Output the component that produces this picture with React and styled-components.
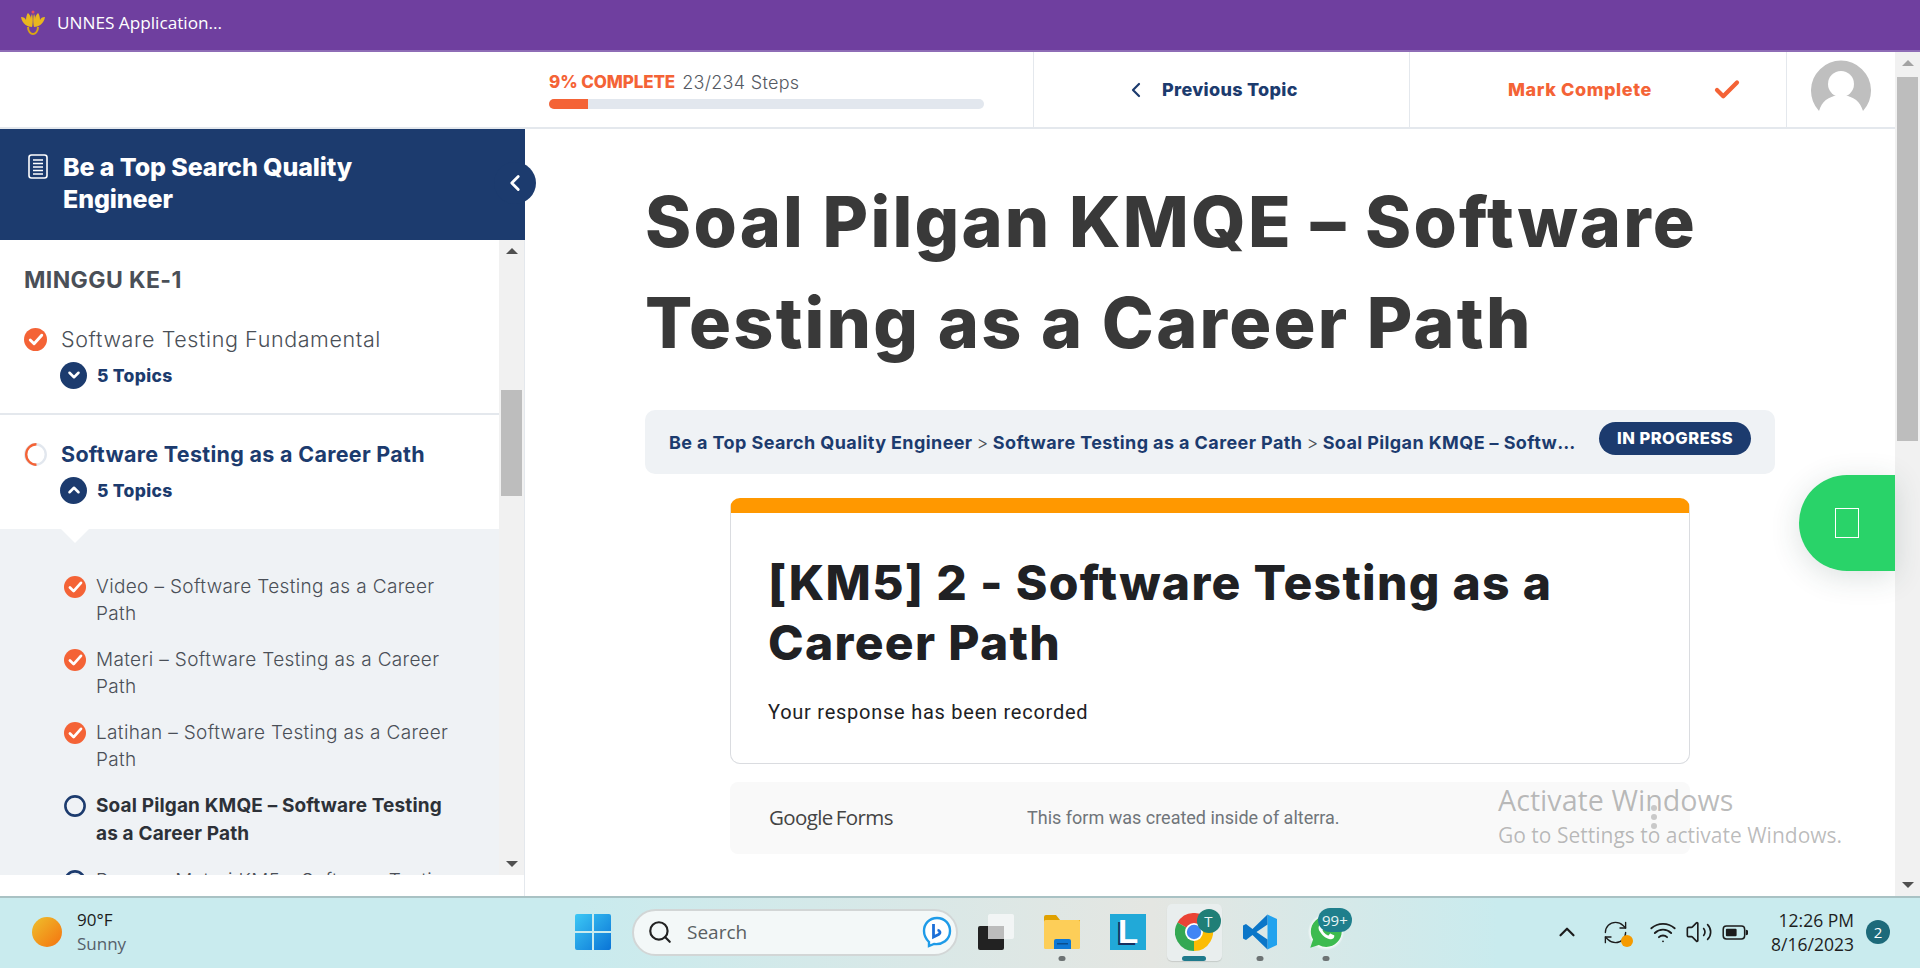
import React from "react";
import styled, { createGlobalStyle } from "styled-components";
import { ChevronLeft, ChevronUp, ChevronDown, Check, Search, Wifi, Volume2, RefreshCw } from "lucide-react";
import { IoLogoWhatsapp } from "react-icons/io";

const GlobalStyle = createGlobalStyle`
    html, body {
        margin: 0;
        padding: 0;
        background: #fff;
        overflow: hidden;
    }
    * {
        box-sizing: border-box;
    }
`;

const HEAD_FONT = `Inter, "Liberation Sans", sans-serif`;
const WIN_FONT = `"Open Sans", "Noto Sans", sans-serif`;
const NAVY = "#1c3b6e";
const ORANGE = "#f46336";
const LINE = "#e4e8ed";

const Page = styled.div`
    width: 1920px;
    height: 968px;
    display: flex;
    flex-direction: column;
    overflow: hidden;
    position: relative;
    font-family: ${HEAD_FONT};
`;

const TitleBar = styled.div`
    height: 52px;
    flex: none;
    background: #6f3f9f;
    border-bottom: 2px solid #8e6cb6;
    display: flex;
    align-items: center;
    gap: 12px;
    padding: 0 0 6px 21px;
    color: #fff;
    font-family: ${WIN_FONT};
    font-size: 17.2px;
`;

const Window = styled.div`
    flex: 1;
    min-height: 0;
    display: flex;
`;

const Left = styled.div`
    flex: 1;
    min-width: 0;
    display: flex;
    flex-direction: column;
`;

const TopBar = styled.div`
    height: 77px;
    flex: none;
    display: flex;
    border-bottom: 2px solid ${LINE};
    padding-left: 549px;
`;

const ProgressBlock = styled.div`
    width: 484px;
    padding-top: 20px;
`;

const ProgressText = styled.div`
    display: flex;
    align-items: center;
    gap: 7px;
    height: 20px;
    margin-bottom: 1px;
    font-size: 18px;
    font-weight: 300;
    letter-spacing: 0.3px;
    color: #555a63;
    b {
        color: ${ORANGE};
        font-size: 17px;
        font-weight: 800;
        letter-spacing: -0.1px;
    }
`;

const Track = styled.div`
    width: 435px;
    height: 10px;
    margin-top: 7px;
    border-radius: 5px;
    background: #e2e7ee;
    overflow: hidden;
`;

const Fill = styled.div`
    height: 100%;
    background: ${ORANGE};
`;

const TopAction = styled.div`
    width: ${(p) => p.$w}px;
    display: flex;
    align-items: center;
    padding-left: ${(p) => p.$pad}px;
    gap: ${(p) => p.$gap}px;
    border-left: 1px solid ${LINE};
    font-size: 18px;
    font-weight: 800;
    letter-spacing: ${(p) => p.$track}px;
    color: ${(p) => p.$color};
    white-space: nowrap;
`;

const AvatarSlot = styled.div`
    flex: 1;
    display: flex;
    align-items: center;
    padding: 0 0 4px 24px;
    border-left: 1px solid ${LINE};
`;

const Columns = styled.div`
    flex: 1;
    min-height: 0;
    display: flex;
`;

const Sidebar = styled.aside`
    width: 525px;
    flex: none;
    display: flex;
    flex-direction: column;
    border-right: 1px solid ${LINE};
    position: relative;
`;

const SideHead = styled.div`
    height: 111px;
    flex: none;
    margin-right: -1px;
    background: ${NAVY};
    color: #fff;
    display: flex;
    gap: 15px;
    padding: 22px 130px 0 28px;
    h2 {
        margin: 0;
        font-size: 25px;
        line-height: 32px;
        font-weight: 800;
        letter-spacing: -0.1px;
    }
    svg {
        flex: none;
        margin-top: 3px;
    }
`;

const CollapseButton = styled.div`
    position: absolute;
    left: 494px;
    top: 33px;
    width: 42px;
    height: 42px;
    border-radius: 50%;
    background: ${NAVY};
    color: #fff;
    display: flex;
    align-items: center;
    justify-content: center;
`;

const SideScroll = styled.div`
    height: 635px;
    flex: none;
    display: flex;
    overflow: hidden;
`;

const SideList = styled.div`
    flex: 1;
    min-width: 0;
    overflow: hidden;
`;

const Week = styled.div`
    padding: 25px 0 0 24px;
    font-size: 23px;
    line-height: 30px;
    font-weight: 700;
    letter-spacing: 0.4px;
    color: #4a4f57;
`;

const Lesson = styled.div`
    padding: ${(p) => p.$top}px 0 ${(p) => p.$bottom}px 24px;
    border-bottom: ${(p) => (p.$line ? `2px solid ${LINE}` : "none")};
`;

const LessonRow = styled.div`
    display: flex;
    align-items: center;
    gap: 14px;
    height: 30px;
    font-size: 21.5px;
    font-weight: ${(p) => (p.$active ? 700 : 300)};
    color: ${(p) => (p.$active ? NAVY : "#4a4f57")};
    white-space: nowrap;
    letter-spacing: ${(p) => (p.$active ? "0.3px" : "0.6px")};
`;

const TopicsRow = styled.div`
    display: flex;
    align-items: center;
    gap: 10px;
    height: 28px;
    margin: 7px 0 0 36px;
    font-size: 17.5px;
    font-weight: 800;
    letter-spacing: 0.3px;
    color: ${NAVY};
`;

const TopicToggle = styled.span`
    width: 27px;
    height: 27px;
    border-radius: 50%;
    background: ${NAVY};
    color: #fff;
    display: flex;
    align-items: center;
    justify-content: center;
`;

const TopicList = styled.div`
    position: relative;
    background: #eff2f5;
    padding: 44px 34px 0 64px;
    &::before {
        content: "";
        position: absolute;
        left: 61px;
        top: 0;
        border-left: 14px solid transparent;
        border-right: 14px solid transparent;
        border-top: 14px solid #fff;
    }
`;

const Topic = styled.div`
    display: flex;
    gap: 10px;
    margin-bottom: 19px;
    font-size: 19px;
    letter-spacing: ${(p) => (p.$current ? 0.15 : 0.35)}px;
    line-height: ${(p) => (p.$current ? 28 : 27)}px;
    font-weight: ${(p) => (p.$current ? 700 : 300)};
    color: ${(p) => (p.$current ? "#2d3138" : "#4a4f57")};
    svg {
        flex: none;
        margin-top: 3px;
    }
`;

const Scrollbar = styled.div`
    width: ${(p) => p.$w}px;
    flex: none;
    background: #f1f1f1;
    display: flex;
    flex-direction: column;
    align-items: center;
    position: relative;
`;

const Arrow = styled.i`
    position: absolute;
    ${(p) => (p.$down ? "bottom" : "top")}: 8px;
    width: 0;
    height: 0;
    border-left: 6px solid transparent;
    border-right: 6px solid transparent;
    ${(p) => (p.$down ? "border-top" : "border-bottom")}: 6px solid ${(p) => p.$color};
`;

const Thumb = styled.div`
    position: absolute;
    top: ${(p) => p.$top}px;
    left: 2px;
    right: 2px;
    height: ${(p) => p.$h}px;
    background: #bdbdbd;
`;

const Content = styled.main`
    flex: 1;
    min-width: 0;
    padding: 42px 120px 0;
    overflow: hidden;
`;

const Title = styled.h1`
    margin: 0 0 37px;
    font-size: 70px;
    line-height: 101px;
    font-weight: 800;
    letter-spacing: 2.2px;
    color: #393939;
`;

const CrumbBar = styled.div`
    height: 64px;
    border-radius: 10px;
    background: #eff2f5;
    display: flex;
    align-items: center;
    padding: 0 24px;
    gap: 18px;
`;

const Crumbs = styled.div`
    flex: 1;
    min-width: 0;
    overflow: hidden;
    white-space: nowrap;
    text-overflow: ellipsis;
    font-size: 18px;
    font-weight: 700;
    letter-spacing: 0.4px;
    color: ${NAVY};
    span {
        font-weight: 300;
        color: #4a4f57;
        margin: 0 4px;
    }
`;

const StatusPill = styled.div`
    width: 152px;
    height: 33px;
    flex: none;
    margin-bottom: 7px;
    padding-bottom: 2px;
    border-radius: 17px;
    background: ${NAVY};
    color: #fff;
    font-size: 16.5px;
    font-weight: 800;
    letter-spacing: 0.5px;
    display: flex;
    align-items: center;
    justify-content: center;
`;

const FormCard = styled.section`
    width: 960px;
    margin: 24px auto 0;
    border-radius: 10px;
    border: 1px solid #dadce0;
    border-top: 15px solid #ff9800;
    padding: 40px 37px 39px;
    h3 {
        margin: 0;
        font-size: 48px;
        line-height: 60px;
        font-weight: 800;
        letter-spacing: 1.3px;
        color: #202124;
    }
    p {
        margin: 27px 0 0;
        font-family: Roboto, sans-serif;
        font-size: 20px;
        line-height: 24px;
        letter-spacing: 0.75px;
        color: #202124;
    }
`;

const FormFooter = styled.div`
    width: 960px;
    height: 72px;
    margin: 18px auto 0;
    padding: 0 0 2px 39px;
    border-radius: 8px;
    background: #f9f9f9;
    display: flex;
    align-items: center;
    font-family: Roboto, sans-serif;
    font-size: 18px;
    color: #70757a;
`;

const FormsLogo = styled.div`
    width: 258px;
    font-family: "Open Sans", sans-serif;
    font-size: 20.5px;
    letter-spacing: -0.6px;
    color: #444;
    span {
        margin-left: 3px;
    }
`;

const ChatTab = styled.div`
    position: absolute;
    left: 1799px;
    top: 475px;
    width: 96px;
    height: 96px;
    border-radius: 48px 0 0 48px;
    background: #29d369;
    box-shadow: 0 6px 30px rgba(40, 70, 60, 0.16);
    display: flex;
    align-items: center;
    justify-content: center;
`;

const MissingGlyph = styled.span`
    width: 24px;
    height: 30px;
    border: 1px solid #fff;
`;

const ActivateNote = styled.div`
    position: absolute;
    left: 1498px;
    top: 780px;
    font-family: ${WIN_FONT};
    color: rgba(60, 60, 60, 0.35);
    pointer-events: none;
    div:first-child {
        font-size: 28.700px;
        line-height: 40px;
    }
    div:last-child {
        font-size: 21px;
        line-height: 30px;
    }
`;

const MenuDots = styled.div`
    position: absolute;
    left: 1651px;
    top: 805px;
    display: flex;
    flex-direction: column;
    gap: 3px;
    i {
        width: 6px;
        height: 6px;
        border-radius: 50%;
        background: #c9c9c9;
    }
`;

const Taskbar = styled.footer`
    height: 72px;
    flex: none;
    border-top: 2px solid #a9c2c4;
    padding-bottom: 2px;
    background: linear-gradient(90deg, #c9ebee 0%, #c9ebee 30%, #e4e6e2 60%, #c9ebee 78%, #c9ebee 100%);
    display: flex;
    align-items: center;
    font-family: ${WIN_FONT};
`;

const Weather = styled.div`
    width: 575px;
    flex: none;
    display: flex;
    align-items: center;
    gap: 15px;
    padding-left: 32px;
    font-size: 17px;
    line-height: 24px;
    color: #1b1b1b;
    small {
        display: block;
        font-size: 17px;
        color: #55606a;
    }
`;

const Sun = styled.div`
    width: 30px;
    height: 30px;
    border-radius: 50%;
    background: linear-gradient(135deg, #eec02c, #f5720f);
`;

const SearchBox = styled.div`
    width: 326px;
    height: 47px;
    margin-left: 21px;
    border-radius: 24px;
    border: 2px solid #d2d6d6;
    background: #f3f8f8;
    display: flex;
    align-items: center;
    padding: 0 4px 0 13px;
    gap: 14px;
    font-size: 19px;
    color: #5a5f62;
    svg:last-child {
        margin-left: auto;
    }
`;

const Apps = styled.div`
    display: flex;
    margin-left: 5px;
`;

const AppSlot = styled.div`
    width: 66px;
    height: 57px;
    display: flex;
    align-items: center;
    justify-content: center;
    position: relative;
    ${(p) => p.$active && `
        background: #e9eeee;
        border-radius: 5px;
        box-shadow: 0 1px 1px rgba(0,0,0,.12);
        margin: 0 5.5px;
        width: 55px;
    `}
    &::after {
        content: "";
        display: ${(p) => (p.$open || p.$active ? "block" : "none")};
        position: absolute;
        bottom: 0;
        left: 50%;
        transform: translateX(-50%);
        width: ${(p) => (p.$active ? 24 : 7)}px;
        height: 5px;
        border-radius: 3px;
        background: ${(p) => (p.$active ? "#1f7a8c" : "#6d7374")};
    }
`;

const LetterTile = styled.div`
    width: 36px;
    height: 36px;
    background: #21a9d8;
    color: #fff;
    font-family: "Liberation Sans", sans-serif;
    font-size: 33px;
    font-weight: 700;
    text-align: center;
    line-height: 36px;
    text-shadow: -2px 2px 0 #16305f;
`;

const CountBadge = styled.div`
    position: absolute;
    height: 24px;
    min-width: 24px;
    top: ${(p) => p.$top}px;
    left: ${(p) => p.$left}px;
    padding: 0 4px;
    border-radius: 12px;
    background: ${(p) => p.$bg};
    color: #e8f4f4;
    font-size: 15px;
    line-height: 24px;
    text-align: center;
    white-space: nowrap;
`;

const WhatsAppWrap = styled.div`
    width: 36px;
    height: 38px;
    border-radius: 50%;
    background: radial-gradient(circle, #fff 55%, transparent 70%);
    color: #3dbb4f;
    display: flex;
    align-items: center;
    justify-content: center;
`;

const Tray = styled.div`
    margin-left: auto;
    display: flex;
    align-items: center;
    padding-right: 30px;
    color: #1c1c1c;
`;

const TrayIcon = styled.div`
    width: ${(p) => p.$w}px;
    display: flex;
    justify-content: center;
    position: relative;
`;

const SyncDot = styled.i`
    position: absolute;
    right: 12px;
    bottom: -1px;
    width: 12px;
    height: 12px;
    border-radius: 50%;
    background: #f59a00;
`;

const Clock = styled.div`
    width: 101px;
    text-align: right;
    font-size: 17.500px;
    line-height: 24px;
    color: #1e1e1e;
`;

const NoticeBadge = styled.div`
    width: 24px;
    height: 24px;
    margin-left: 12px;
    border-radius: 50%;
    background: #1d6a7a;
    color: #fff;
    font-size: 15px;
    line-height: 24px;
    text-align: center;
`;

function UnnesLogo() {
    return (
        <svg width="24" height="25" viewBox="0 0 24 25" fill="#e9b71e">
            <path d="M11 17C7 17 1 14 0 7c3 0 4 1 5 3C5 7 6 4 7 3c2 2 3 4 3 6 0-2 0-3 1-5 1 3 1 9 0 13z" />
            <path d="M13 17c4 0 10-3 11-10-3 0-4 1-5 3 0-3-1-6-2-7-2 2-3 4-3 6 0-2 0-3-1-5-1 3-1 9 0 13z" />
            <path d="M7 17c0 5 3 7 5 7s5-2 5-7" fill="none" stroke="#d9a514" strokeWidth="2" />
            <circle cx="12" cy="2" r="1.500" fill="#e8505b" />
        </svg>
    );
}

function CheckCircle({ size }) {
    return (
        <svg width={size} height={size} viewBox="0 0 24 24">
            <circle cx="12" cy="12" r="12" fill={ORANGE} />
            <path d="M6.500 12.500l4 4 8-9" fill="none" stroke="#fff" strokeWidth="3" strokeLinecap="round" strokeLinejoin="round" />
        </svg>
    );
}

function ProgressRing() {
    return (
        <svg width="23" height="23" viewBox="0 0 24 24" fill="none" strokeWidth="2.500">
            <circle cx="12" cy="12" r="10.700" stroke="#e2e7ee" />
            <path d="M13 22.700A10.700 10.700 0 0 1 13 1.300" stroke={ORANGE} />
        </svg>
    );
}

function OpenRing() {
    return (
        <svg width="22" height="22" viewBox="0 0 24 24" fill="none">
            <circle cx="12" cy="12" r="10.500" stroke={NAVY} strokeWidth="2.800" />
        </svg>
    );
}

function CourseIcon() {
    return (
        <svg width="20" height="25" viewBox="0 0 20 25" fill="none" stroke="#fff">
            <rect x="1" y="1" width="18" height="23" rx="2.500" strokeWidth="1.600" />
            <path d="M5 6h10M5 9.500h10M5 13h10M5 16.500h10M5 20h10" strokeWidth="1.400" />
        </svg>
    );
}

function Avatar() {
    return (
        <svg width="60" height="60" viewBox="0 0 60 60">
            <path d="M8 53A30 30 0 1 1 52 53C49 44 44 38 30 37C16 38 11 44 8 53Z" fill="#bfbfbf" />
            <circle cx="30" cy="26" r="13" fill="#fff" />
            <path d="M10 55C13 42 22 37 30 37C38 37 47 42 50 55Z" fill="#fff" />
        </svg>
    );
}

function WindowsLogo() {
    return (
        <svg width="36" height="36" viewBox="0 0 36 36">
            <defs>
                <linearGradient id="winGrad" x1="0" y1="0" x2="1" y2="1">
                    <stop offset="0" stopColor="#3cc8f5" />
                    <stop offset="1" stopColor="#0a74d6" />
                </linearGradient>
            </defs>
            <path d="M2 0h15v17H0V2a2 2 0 0 1 2-2zM19 0h15a2 2 0 0 1 2 2v15H19zM0 19h17v17H2a2 2 0 0 1-2-2zM19 19h17v15a2 2 0 0 1-2 2H19z" fill="url(#winGrad)" />
        </svg>
    );
}

function BingIcon() {
    return (
        <svg width="30" height="32" viewBox="0 0 30 32" fill="none">
            <path d="M15 2C7 2 2 8 2 15c0 5 2 8 5 11v4l5-2c8 1 16-4 16-13C28 8 23 2 15 2z" fill="#fff" stroke="#1e9be8" strokeWidth="2.400" />
            <path d="M11.500 8v13l5-2.500c2.500-1.500 1.500-4-1-4.500" stroke="#1c6fd8" strokeWidth="2.800" />
        </svg>
    );
}

function TaskView() {
    return (
        <svg width="36" height="36" viewBox="0 0 36 36">
            <rect x="0" y="12" width="26" height="24" rx="2" fill="#222" />
            <rect x="10" y="0" width="26" height="25" rx="2" fill="#f4f6f6" opacity="0.9" />
            <rect x="10" y="12" width="16" height="13" fill="#bcbcbc" />
        </svg>
    );
}

function FolderIcon() {
    return (
        <svg width="36" height="34" viewBox="0 0 36 34">
            <path d="M0 2a2 2 0 0 1 2-2h10l4 5h20v6H0z" fill="#e0a100" />
            <rect x="0" y="5" width="36" height="29" rx="1.500" fill="#fdce58" />
            <path d="M10 26a2 2 0 0 1 2-2h13a2 2 0 0 1 2 2v8H10z" fill="#0f78d4" />
            <rect x="13" y="28" width="11" height="1.500" fill="#0a4f8f" />
        </svg>
    );
}

function ChromeIcon() {
    return (
        <svg width="38" height="38" viewBox="0 0 36 36">
            <path d="M18 18L2.400 9A18 18 0 0 1 33.600 9Z" fill="#ea4335" />
            <path d="M18 18L33.600 9A18 18 0 0 1 18 36Z" fill="#fbbc04" />
            <path d="M18 18L18 36A18 18 0 0 1 2.400 9Z" fill="#34a853" />
            <circle cx="18" cy="18" r="8.500" fill="#fff" />
            <circle cx="18" cy="18" r="6.800" fill="#4285f4" />
        </svg>
    );
}

function CodeIcon() {
    return (
        <svg width="36" height="36" viewBox="0 0 36 36">
            <path d="M25.500 0.500L35 5v26l-9.500 4.500z" fill="#22a2ee" />
            <path d="M25.500 0.500L10.500 15 4 10 1 11.500v13L4 26l6.500-5 15 14.500V25.500L14.500 18l11-7.500z" fill="#0b76c8" />
        </svg>
    );
}

function BatteryIcon() {
    return (
        <svg width="26" height="15" viewBox="0 0 24 14" fill="none">
            <rect x="1" y="1" width="20" height="12" rx="3" stroke="#1c1c1c" strokeWidth="1.400" />
            <rect x="3.500" y="3.500" width="10" height="7" rx="1" fill="#1c1c1c" />
            <path d="M22 4.500a2.500 2.500 0 0 1 0 5z" fill="#1c1c1c" />
        </svg>
    );
}

export default function App() {
    return (
        <Page>
            <GlobalStyle />
            <TitleBar>
                <UnnesLogo />
                UNNES Application...
            </TitleBar>

            <Window>
                <Left>
                    <TopBar>
                        <ProgressBlock>
                            <ProgressText>
                                <b>9% COMPLETE</b> 23/234 Steps
                            </ProgressText>
                            <Track>
                                <Fill style={{ width: `${(23 / 234) * 100 - 0.8}%` }} />
                            </Track>
                        </ProgressBlock>
                        <TopAction $w={376} $pad={90} $gap={14} $track={0.3} $color={NAVY}>
                            <ChevronLeft size={24} strokeWidth={2.200} />
                            Previous Topic
                        </TopAction>
                        <TopAction $w={377} $pad={98} $gap={60} $track={0.6} $color={ORANGE}>
                            Mark Complete
                            <Check size={30} strokeWidth={3.400} />
                        </TopAction>
                        <AvatarSlot>
                            <Avatar />
                        </AvatarSlot>
                    </TopBar>

                    <Columns>
                        <Sidebar>
                            <SideHead>
                                <CourseIcon />
                                <h2>Be a Top Search Quality Engineer</h2>
                            </SideHead>
                            <CollapseButton>
                                <ChevronLeft size={26} strokeWidth={2.600} />
                            </CollapseButton>
                            <SideScroll>
                                <SideList>
                                    <Week>MINGGU KE-1</Week>
                                    <Lesson $top={29} $bottom={24} $line>
                                        <LessonRow>
                                            <CheckCircle size={23} />
                                            Software Testing Fundamental
                                        </LessonRow>
                                        <TopicsRow>
                                            <TopicToggle><ChevronDown size={18} strokeWidth={3.400} /></TopicToggle>
                                            5 Topics
                                        </TopicsRow>
                                    </Lesson>
                                    <Lesson $top={24} $bottom={25}>
                                        <LessonRow $active>
                                            <ProgressRing />
                                            Software Testing as a Career Path
                                        </LessonRow>
                                        <TopicsRow>
                                            <TopicToggle><ChevronUp size={18} strokeWidth={3.400} /></TopicToggle>
                                            5 Topics
                                        </TopicsRow>
                                    </Lesson>
                                    <TopicList>
                                        <Topic>
                                            <CheckCircle size={22} />
                                            <span>Video – Software Testing as a Career Path</span>
                                        </Topic>
                                        <Topic>
                                            <CheckCircle size={22} />
                                            <span>Materi – Software Testing as a Career Path</span>
                                        </Topic>
                                        <Topic>
                                            <CheckCircle size={22} />
                                            <span>Latihan – Software Testing as a Career Path</span>
                                        </Topic>
                                        <Topic $current>
                                            <OpenRing />
                                            <span>Soal Pilgan KMQE – Software Testing as a Career Path</span>
                                        </Topic>
                                        <Topic>
                                            <OpenRing />
                                            <span>Resume Materi KM5 – Software Testing as a Career Path</span>
                                        </Topic>
                                    </TopicList>
                                </SideList>
                                <Scrollbar $w={25}>
                                    <Arrow $color="#505050" />
                                    <Thumb $top={150} $h={106} />
                                    <Arrow $down $color="#505050" />
                                </Scrollbar>
                            </SideScroll>
                        </Sidebar>

                        <Content>
                            <Title>Soal Pilgan KMQE – Software Testing as a Career Path</Title>
                            <CrumbBar>
                                <Crumbs>
                                    Be a Top Search Quality Engineer<span>&gt;</span>Software Testing as a Career Path<span>&gt;</span>Soal Pilgan KMQE – Software Testing as a Career Path
                                </Crumbs>
                                <StatusPill>IN PROGRESS</StatusPill>
                            </CrumbBar>
                            <FormCard>
                                <h3>[KM5] 2 - Software Testing as a Career Path</h3>
                                <p>Your response has been recorded</p>
                            </FormCard>
                            <FormFooter>
                                <FormsLogo>Google<span>Forms</span></FormsLogo>
                                This form was created inside of alterra.
                            </FormFooter>
                        </Content>
                    </Columns>
                </Left>
                <Scrollbar $w={25}>
                    <Arrow $color="#a3a3a3" />
                    <Thumb $top={25} $h={364} />
                    <Arrow $down $color="#505050" />
                </Scrollbar>
            </Window>

            <Taskbar>
                <Weather>
                    <Sun />
                    <div>
                        90°F
                        <small>Sunny</small>
                    </div>
                </Weather>
                <WindowsLogo />
                <SearchBox>
                    <Search size={26} strokeWidth={2} color="#222" />
                    Search
                    <BingIcon />
                </SearchBox>
                <Apps>
                    <AppSlot><TaskView /></AppSlot>
                    <AppSlot $open><FolderIcon /></AppSlot>
                    <AppSlot><LetterTile>L</LetterTile></AppSlot>
                    <AppSlot $active>
                        <ChromeIcon />
                        <CountBadge $top={5} $left={30} $bg="#1f7f77">T</CountBadge>
                    </AppSlot>
                    <AppSlot $open><CodeIcon /></AppSlot>
                    <AppSlot $open>
                        <WhatsAppWrap><IoLogoWhatsapp size={42} /></WhatsAppWrap>
                        <CountBadge $top={4} $left={25} $bg="#1f7f8c">99+</CountBadge>
                    </AppSlot>
                </Apps>
                <Tray>
                    <TrayIcon $w={36}><ChevronUp size={26} strokeWidth={2} /></TrayIcon>
                    <TrayIcon $w={60}>
                        <RefreshCw size={27} strokeWidth={1.200} />
                        <SyncDot />
                    </TrayIcon>
                    <TrayIcon $w={36}><Wifi size={28} strokeWidth={1.600} /></TrayIcon>
                    <TrayIcon $w={36}><Volume2 size={28} strokeWidth={1.400} /></TrayIcon>
                    <TrayIcon $w={36}><BatteryIcon /></TrayIcon>
                    <Clock>
                        12:26 PM
                        <br />
                        8/16/2023
                    </Clock>
                    <NoticeBadge>2</NoticeBadge>
                </Tray>
            </Taskbar>

            <ChatTab><MissingGlyph /></ChatTab>
            <ActivateNote>
                <div>Activate Windows</div>
                <div>Go to Settings to activate Windows.</div>
            </ActivateNote>
            <MenuDots><i /><i /><i /></MenuDots>
        </Page>
    );
}
